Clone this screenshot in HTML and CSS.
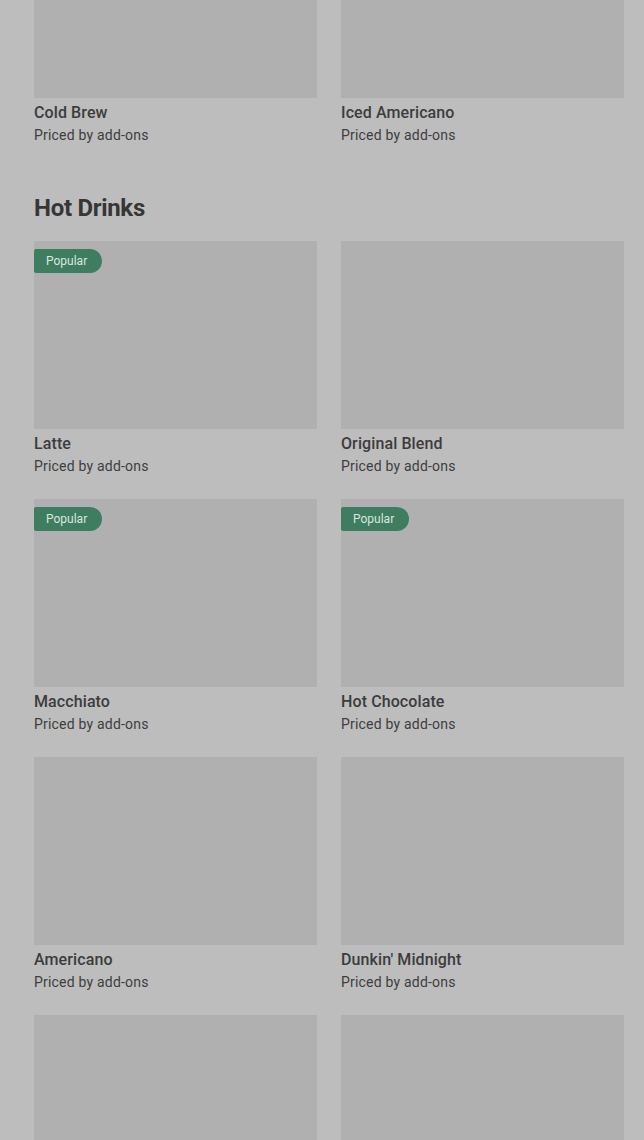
FILE: index.html
```html
<!DOCTYPE html>
<html>
<head>
<meta charset="utf-8">
<link rel="stylesheet" href="styles.css">
</head>
<body>
<main class="menu">
  <section class="grid grid-first">
    <div class="card"><div class="thumb"></div><div class="name">Cold Brew</div><div class="price">Priced by add-ons</div></div>
    <div class="card"><div class="thumb"></div><div class="name">Iced Americano</div><div class="price">Priced by add-ons</div></div>
  </section>
  <h2 class="section-title">Hot Drinks</h2>
  <section class="grid">
    <div class="card"><div class="thumb"><span class="badge">Popular</span></div><div class="name">Latte</div><div class="price">Priced by add-ons</div></div>
    <div class="card"><div class="thumb"></div><div class="name">Original Blend</div><div class="price">Priced by add-ons</div></div>
    <div class="card"><div class="thumb"><span class="badge">Popular</span></div><div class="name">Macchiato</div><div class="price">Priced by add-ons</div></div>
    <div class="card"><div class="thumb"><span class="badge">Popular</span></div><div class="name">Hot Chocolate</div><div class="price">Priced by add-ons</div></div>
    <div class="card"><div class="thumb"></div><div class="name">Americano</div><div class="price">Priced by add-ons</div></div>
    <div class="card"><div class="thumb"></div><div class="name">Dunkin' Midnight</div><div class="price">Priced by add-ons</div></div>
    <div class="card"><div class="thumb"></div></div>
    <div class="card"><div class="thumb"></div></div>
  </section>
</main>
</body>
</html>
```

FILE: styles.css
```css
html, body {
  margin: 0;
  padding: 0;
  background: #bdbdbd;
}
body {
  font-family: Roboto, "Liberation Sans", sans-serif;
  color: #363636;
}
.menu {
  height: 1140px;
  overflow: hidden;
  padding: 0 20px 0 34px;
}
.grid {
  display: grid;
  grid-template-columns: 283px 283px;
  column-gap: 24px;
  row-gap: 23px;
}
.grid-first {
  margin-top: -90px;
}
.thumb {
  position: relative;
  height: 188px;
  background: #b0b0b0;
}
.badge {
  position: absolute;
  top: 8px;
  left: 0;
  height: 24px;
  line-height: 24px;
  width: 68px;
  box-sizing: border-box;
  padding-left: 12px;
  font-size: 12px;
  color: #dbe6df;
  background: #3e7d5f;
  border-radius: 2px 12px 12px 2px;
}
.name {
  margin-top: 4px;
  font-size: 16px;
  line-height: 21px;
  font-weight: 500;
  letter-spacing: 0.1px;
  color: #3c3c3c;
}
.price {
  margin-top: 2px;
  font-size: 14px;
  line-height: 20px;
  letter-spacing: 0.2px;
  color: #3e3e3e;
}
.section-title {
  margin: 49px 0 19px;
  font-size: 24px;
  line-height: 28px;
  font-weight: 700;
  letter-spacing: -0.3px;
  color: #363636;
}
```
